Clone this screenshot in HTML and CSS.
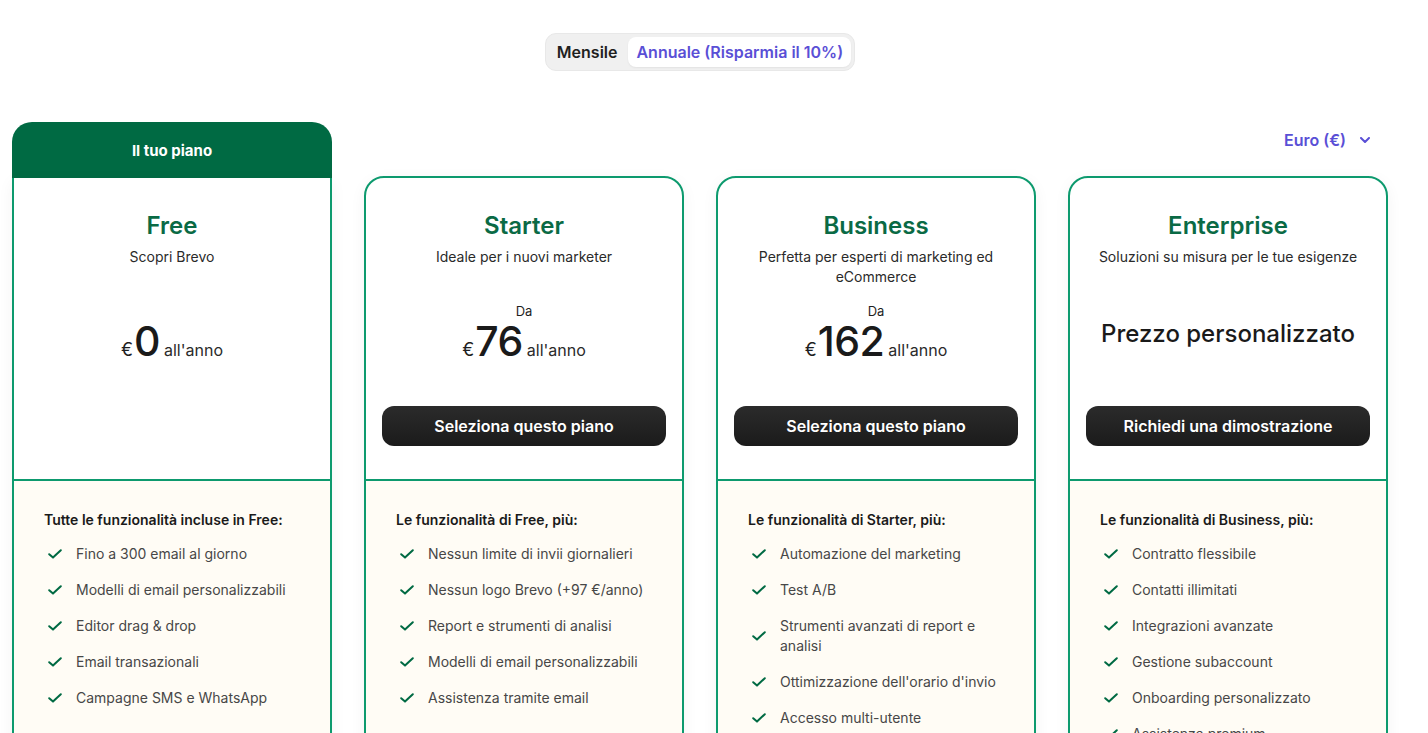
FILE: index.html
```html
<!DOCTYPE html>
<html lang="it">
<head>
<meta charset="utf-8">
<title>Prezzi Brevo</title>
<link rel="stylesheet" href="styles.css">
</head>
<body>
<div class="page">
  <div class="toggle-row">
    <div class="toggle">
      <button class="toggle-btn">Mensile</button>
      <button class="toggle-btn active">Annuale (Risparmia il 10%)</button>
    </div>
  </div>

  <div class="plans">
    <!-- Free -->
    <div class="plan-col">
      <div class="current-banner">Il tuo piano</div>
      <div class="card card-current">
        <div class="card-top">
          <h2 class="plan-name">Free</h2>
          <p class="plan-sub">Scopri Brevo</p>
          <div class="price-block">
            <div class="price"><span class="cur">€</span><span class="amount">0</span><span class="period">all'anno</span></div>
          </div>
        </div>
        <div class="card-bottom">
          <p class="feat-title">Tutte le funzionalità incluse in Free:</p>
          <ul class="feats">
            <li><svg class="check" viewBox="0 0 14 10"><path d="M1.2 5.2 L5 8.6 L12.8 1.2" /></svg><span>Fino a 300 email al giorno</span></li>
            <li><svg class="check" viewBox="0 0 14 10"><path d="M1.2 5.2 L5 8.6 L12.8 1.2" /></svg><span>Modelli di email personalizzabili</span></li>
            <li><svg class="check" viewBox="0 0 14 10"><path d="M1.2 5.2 L5 8.6 L12.8 1.2" /></svg><span>Editor drag &amp; drop</span></li>
            <li><svg class="check" viewBox="0 0 14 10"><path d="M1.2 5.2 L5 8.6 L12.8 1.2" /></svg><span>Email transazionali</span></li>
            <li><svg class="check" viewBox="0 0 14 10"><path d="M1.2 5.2 L5 8.6 L12.8 1.2" /></svg><span>Campagne SMS e WhatsApp</span></li>
          </ul>
        </div>
      </div>
    </div>

    <!-- Starter -->
    <div class="plan-col">
      <div class="slot"></div>
      <div class="card">
        <div class="card-top">
          <h2 class="plan-name">Starter</h2>
          <p class="plan-sub">Ideale per i nuovi marketer</p>
          <div class="price-block">
            <div class="from">Da</div>
            <div class="price"><span class="cur">€</span><span class="amount">76</span><span class="period">all'anno</span></div>
          </div>
          <button class="cta">Seleziona questo piano</button>
        </div>
        <div class="card-bottom">
          <p class="feat-title">Le funzionalità di Free, più:</p>
          <ul class="feats">
            <li><svg class="check" viewBox="0 0 14 10"><path d="M1.2 5.2 L5 8.6 L12.8 1.2" /></svg><span>Nessun limite di invii giornalieri</span></li>
            <li><svg class="check" viewBox="0 0 14 10"><path d="M1.2 5.2 L5 8.6 L12.8 1.2" /></svg><span>Nessun logo Brevo (+97 €/anno)</span></li>
            <li><svg class="check" viewBox="0 0 14 10"><path d="M1.2 5.2 L5 8.6 L12.8 1.2" /></svg><span>Report e strumenti di analisi</span></li>
            <li><svg class="check" viewBox="0 0 14 10"><path d="M1.2 5.2 L5 8.6 L12.8 1.2" /></svg><span>Modelli di email personalizzabili</span></li>
            <li><svg class="check" viewBox="0 0 14 10"><path d="M1.2 5.2 L5 8.6 L12.8 1.2" /></svg><span>Assistenza tramite email</span></li>
          </ul>
        </div>
      </div>
    </div>

    <!-- Business -->
    <div class="plan-col">
      <div class="slot"></div>
      <div class="card">
        <div class="card-top">
          <h2 class="plan-name">Business</h2>
          <p class="plan-sub">Perfetta per esperti di marketing ed eCommerce</p>
          <div class="price-block">
            <div class="from">Da</div>
            <div class="price"><span class="cur">€</span><span class="amount">162</span><span class="period">all'anno</span></div>
          </div>
          <button class="cta">Seleziona questo piano</button>
        </div>
        <div class="card-bottom">
          <p class="feat-title">Le funzionalità di Starter, più:</p>
          <ul class="feats">
            <li><svg class="check" viewBox="0 0 14 10"><path d="M1.2 5.2 L5 8.6 L12.8 1.2" /></svg><span>Automazione del marketing</span></li>
            <li><svg class="check" viewBox="0 0 14 10"><path d="M1.2 5.2 L5 8.6 L12.8 1.2" /></svg><span>Test A/B</span></li>
            <li><svg class="check" viewBox="0 0 14 10"><path d="M1.2 5.2 L5 8.6 L12.8 1.2" /></svg><span>Strumenti avanzati di report e analisi</span></li>
            <li><svg class="check" viewBox="0 0 14 10"><path d="M1.2 5.2 L5 8.6 L12.8 1.2" /></svg><span>Ottimizzazione dell'orario d'invio</span></li>
            <li><svg class="check" viewBox="0 0 14 10"><path d="M1.2 5.2 L5 8.6 L12.8 1.2" /></svg><span>Accesso multi-utente</span></li>
          </ul>
        </div>
      </div>
    </div>

    <!-- Enterprise -->
    <div class="plan-col">
      <div class="slot slot-currency">
        <button class="currency">Euro (€)
          <svg class="chev" viewBox="0 0 10 6"><path d="M1 1 L5 5 L9 1" /></svg>
        </button>
      </div>
      <div class="card">
        <div class="card-top">
          <h2 class="plan-name">Enterprise</h2>
          <p class="plan-sub">Soluzioni su misura per le tue esigenze</p>
          <div class="price-block price-custom">
            <div class="custom">Prezzo personalizzato</div>
          </div>
          <button class="cta">Richiedi una dimostrazione</button>
        </div>
        <div class="card-bottom">
          <p class="feat-title">Le funzionalità di Business, più:</p>
          <ul class="feats">
            <li><svg class="check" viewBox="0 0 14 10"><path d="M1.2 5.2 L5 8.6 L12.8 1.2" /></svg><span>Contratto flessibile</span></li>
            <li><svg class="check" viewBox="0 0 14 10"><path d="M1.2 5.2 L5 8.6 L12.8 1.2" /></svg><span>Contatti illimitati</span></li>
            <li><svg class="check" viewBox="0 0 14 10"><path d="M1.2 5.2 L5 8.6 L12.8 1.2" /></svg><span>Integrazioni avanzate</span></li>
            <li><svg class="check" viewBox="0 0 14 10"><path d="M1.2 5.2 L5 8.6 L12.8 1.2" /></svg><span>Gestione subaccount</span></li>
            <li><svg class="check" viewBox="0 0 14 10"><path d="M1.2 5.2 L5 8.6 L12.8 1.2" /></svg><span>Onboarding personalizzato</span></li>
            <li><svg class="check" viewBox="0 0 14 10"><path d="M1.2 5.2 L5 8.6 L12.8 1.2" /></svg><span>Assistenza premium</span></li>
          </ul>
        </div>
      </div>
    </div>
  </div>
</div>
</body>
</html>
```

FILE: styles.css
```css
* {
  box-sizing: border-box;
}

html, body {
  margin: 0;
  padding: 0;
  background: #ffffff;
  overflow: hidden;
}

body {
  font-family: Inter, "Noto Sans", "Liberation Sans", sans-serif;
  color: #1f1f1f;
}

.page {
  width: 1376px;
  margin-left: 12px;
  padding-top: 33px;
}

/* Toggle */
.toggle-row {
  display: flex;
  justify-content: center;
}

.toggle {
  display: flex;
  gap: 3px;
  padding: 3px;
  background: #f0f0f0;
  border: 1px solid #e8e8e8;
  border-radius: 11px;
}

.toggle-btn {
  font-family: inherit;
  font-size: 16px;
  font-weight: 600;
  line-height: 20px;
  height: 30px;
  padding: 0 8px;
  border: none;
  border-radius: 8px;
  background: transparent;
  color: #1f1f1f;
  cursor: pointer;
}

.toggle-btn.active {
  background: #ffffff;
  color: #5a4fd6;
  box-shadow: 0 1px 2px rgba(0, 0, 0, 0.06);
}

/* Plans */
.plans {
  display: grid;
  grid-template-columns: repeat(4, 320px);
  column-gap: 32px;
  margin-top: 51px;
  align-items: start;
}

.plan-col {
  display: flex;
  flex-direction: column;
}

.slot {
  height: 54px;
}

.slot-currency {
  display: flex;
  justify-content: flex-end;
  align-items: flex-start;
  padding-top: 6px;
  padding-right: 18px;
}

.currency {
  display: flex;
  align-items: center;
  gap: 14px;
  font-family: inherit;
  font-size: 16px;
  font-weight: 600;
  line-height: 24px;
  color: #5a4fd6;
  background: none;
  border: none;
  padding: 0;
  cursor: pointer;
}

.chev {
  width: 10px;
  height: 6px;
  fill: none;
  stroke: #5a4fd6;
  stroke-width: 2;
  stroke-linecap: round;
  stroke-linejoin: round;
}

.current-banner {
  height: 56px;
  background: #006a43;
  color: #ffffff;
  border-radius: 20px 20px 0 0;
  display: flex;
  align-items: center;
  justify-content: center;
  font-size: 15px;
  font-weight: 700;
}

.card {
  border: 2px solid #0d9a6e;
  border-radius: 20px;
  background: #ffffff;
  overflow: hidden;
  box-shadow: 0 4px 16px rgba(0, 0, 0, 0.05);
}

.card-current {
  border-top: none;
  border-radius: 0 0 20px 20px;
}

.card-top {
  height: 301px;
  padding: 32px 16px 0;
  display: flex;
  flex-direction: column;
  align-items: center;
  text-align: center;
}

.plan-name {
  margin: 0;
  font-size: 24px;
  line-height: 32px;
  font-weight: 600;
  color: #0a6a45;
}

.plan-sub {
  margin: 5px 0 0;
  min-height: 40px;
  font-size: 14px;
  line-height: 20px;
  color: #2a2a2a;
  max-width: 260px;
}

.price-block {
  margin-top: 15px;
  height: 59px;
  display: flex;
  flex-direction: column;
  justify-content: flex-end;
  align-items: center;
}

.price-custom {
  justify-content: center;
  padding-top: 4px;
}

.from {
  font-size: 13px;
  line-height: 18px;
  color: #1f1f1f;
}

.price {
  display: flex;
  align-items: baseline;
  height: 40px;
  line-height: 40px;
  margin-top: 1px;
}

.cur {
  font-size: 18px;
  color: #1f1f1f;
  margin-right: 1px;
}

.amount {
  font-size: 41px;
  font-weight: 500;
  color: #1a1a1a;
  letter-spacing: -0.5px;
}

.period {
  font-size: 16px;
  color: #2a2a2a;
  margin-left: 4px;
}

.custom {
  font-size: 24px;
  line-height: 32px;
  font-weight: 500;
  color: #1a1a1a;
}

.cta {
  margin-top: 45px;
  width: 284px;
  height: 40px;
  border: none;
  border-radius: 12px;
  background: linear-gradient(180deg, #2b2b2b 0%, #1b1b1b 100%);
  color: #ffffff;
  font-family: inherit;
  font-size: 16px;
  font-weight: 600;
  cursor: pointer;
}

.card-bottom {
  border-top: 2px solid #0d9a6e;
  background: #fffcf5;
  padding: 29px 20px 24px 30px;
  min-height: 300px;
}

.feat-title {
  margin: 0;
  font-size: 14px;
  line-height: 20px;
  font-weight: 600;
  color: #1a1a1a;
}

.feats {
  list-style: none;
  margin: 14px 0 0;
  padding: 0;
  display: flex;
  flex-direction: column;
  gap: 16px;
}

.feats li {
  display: flex;
  align-items: center;
  font-size: 14px;
  line-height: 20px;
  color: #474747;
}

.check {
  flex: none;
  width: 14px;
  height: 10px;
  margin-left: 4px;
  margin-right: 14px;
  fill: none;
  stroke: #006a43;
  stroke-width: 2;
  stroke-linecap: round;
  stroke-linejoin: round;
}
```
